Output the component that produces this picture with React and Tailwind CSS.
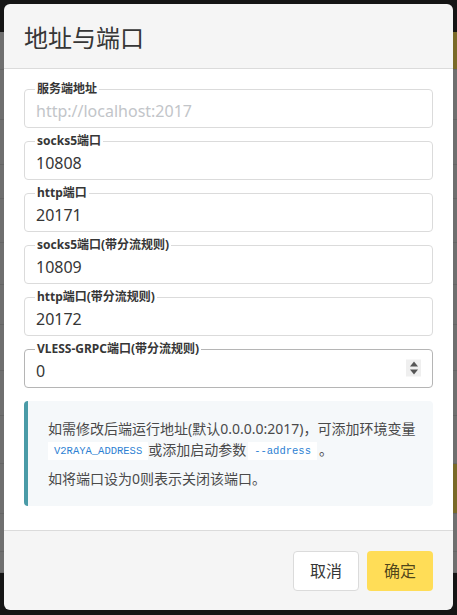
import React from 'react';

const fields = [
  { label: '服务端地址', value: '', placeholder: 'http://localhost:2017' },
  { label: 'socks5端口', value: '10808' },
  { label: 'http端口', value: '20171' },
  { label: 'socks5端口(带分流规则)', value: '10809' },
  { label: 'http端口(带分流规则)', value: '20172' },
];

const bgRows = [38, 50, 45, 34, 44, 42, 40, 46, 45, 48, 50, 38, 21];

const mono = { fontFamily: '"Liberation Mono", monospace' };

function PortField({ label, value, placeholder, type = 'text', dark = false }) {
  return (
    <fieldset
      className={`rounded border pl-[10px] pr-[10px] ${dark ? 'border-[#b5b5b5]' : 'border-[#dbdbdb]'}`}
    >
      <legend className="px-[2px] text-xs font-bold leading-4 text-[#363636]">{label}</legend>
      <div className="relative -mt-[8px] h-[38px]">
        <input
          type={type}
          defaultValue={value}
          placeholder={placeholder}
          className="block h-full w-full pl-px pt-[6px] text-base text-[#363636] outline-none placeholder:text-[#c2c5c9] [appearance:textfield] [&::-webkit-inner-spin-button]:appearance-none"
        />
        {type === 'number' && (
          <div className="absolute right-px top-1/2 flex h-[17px] w-[15px] -translate-y-1/2 flex-col items-center justify-center gap-[3px] bg-[#efefef]">
            <span className="h-0 w-0 border-x-[4px] border-b-[5px] border-x-transparent border-b-[#555]" />
            <span className="h-0 w-0 border-x-[4px] border-t-[5px] border-x-transparent border-t-[#555]" />
          </div>
        )}
      </div>
    </fieldset>
  );
}

export default function App() {
  return (
    <div
      className="relative w-[457px] h-[615px] overflow-hidden bg-[#141414]"
      style={{ fontFamily: '"Noto Sans", "Noto Sans CJK SC", sans-serif' }}
    >
      {/* dimmed page behind the modal */}
      <div className="flex h-full flex-col">
        <div className="h-[32px] bg-[#151515]" />
        <div className="flex flex-1 flex-col bg-[#6f6f6f]">
          {bgRows.map((h, i) => (
            <div
              key={i}
              className="flex justify-end border-b border-[#656565]"
              style={{ height: h }}
            >
              {(i === 0 || i === 10) && <div className="w-[6px] bg-[#7a6a28]" />}
            </div>
          ))}
        </div>
        <div className="h-[42px] bg-[#151515]" />
      </div>

      {/* modal card */}
      <div className="absolute left-[4px] top-[4px] flex h-[606px] w-[449px] flex-col overflow-hidden rounded-md">
        <header className="flex h-[65px] items-center border-b border-[#dbdbdb] bg-[#f5f5f5] px-5 pt-[3px]">
          <h2 className="text-2xl leading-none text-[#363636]">地址与端口</h2>
        </header>

        <section className="flex flex-1 flex-col gap-[5px] bg-white px-5 pt-3">
          {fields.map((f) => (
            <PortField key={f.label} {...f} />
          ))}
          <PortField label="VLESS-GRPC端口(带分流规则)" value="0" type="number" dark />

          <div className="mt-[8px] rounded border-l-4 border-[#4a9ba7] bg-[#f5f8fa] py-[17px] pl-5 pr-[6px] text-sm leading-[21px] text-[#4a4a4a]">
            <p className="mb-2 whitespace-nowrap">
              如需修改后端运行地址(默认0.0.0.0:2017)，可添加环境变量
              <br />
              <code className="inline-block bg-white px-[6px] text-[10.5px] leading-[18px] text-[#2d7fd3] align-middle" style={mono}>
                V2RAYA_ADDRESS
              </code>
              或添加启动参数
              <code className="ml-[2px] inline-block bg-white px-[6px] text-[10.5px] leading-[18px] text-[#2d7fd3] align-middle" style={mono}>
                --address
              </code>
              <span className="ml-[2px]">。</span>
            </p>
            <p>如将端口设为0则表示关闭该端口。</p>
          </div>
        </section>

        <footer className="flex h-[80px] items-start justify-end gap-2 border-t border-[#dbdbdb] bg-[#f5f5f5] px-5 pt-5">
          <button className="h-10 rounded border border-[#dbdbdb] bg-white px-4 text-base text-[#363636]">
            取消
          </button>
          <button className="h-10 rounded border border-transparent bg-[#ffdd57] px-4 text-base text-black/70">
            确定
          </button>
        </footer>
      </div>
    </div>
  );
}
